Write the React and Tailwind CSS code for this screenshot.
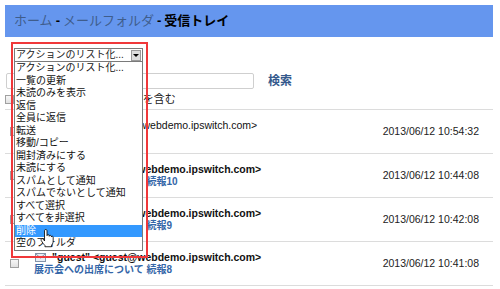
const MENU = [
  'アクションのリスト化...', '一覧の更新', '未読のみを表示', '返信', '全員に返信', '転送',
  '移動/コピー', '開封済みにする', '未読にする', 'スパムとして通知', 'スパムでないとして通知',
  'すべて選択', 'すべてを非選択', '削除', '空のフォルダ',
];

const MESSAGES = [
  { subject: '展示会のご案内', date: '2013/06/12 10:54:32', unread: false },
  { subject: '展示会への出席について 続報10', date: '2013/06/12 10:44:08', unread: true },
  { subject: '展示会への出席について 続報9', date: '2013/06/12 10:42:08', unread: true },
  { subject: '展示会への出席について 続報8', date: '2013/06/12 10:41:08', unread: true },
];

const FONT = { fontFamily: '"Liberation Sans", "Noto Sans CJK JP", sans-serif' };

function Box() {
  return <div className="w-[9px] h-[9px] shrink-0 border border-[#a0a0a0] bg-gradient-to-b from-[#f7f7f7] to-[#e2e2e2]" />;
}

function Envelope() {
  return (
    <svg width="11" height="9" viewBox="0 0 11 9" className="shrink-0">
      <rect x="0.5" y="0.5" width="10" height="8" fill="#e9eef5" stroke="#8593a8" />
      <path d="M0.5 0.5 L5.5 5 L10.5 0.5" fill="none" stroke="#8593a8" />
    </svg>
  );
}

function Reply() {
  return (
    <svg width="10" height="9" viewBox="0 0 10 9" className="shrink-0">
      <path d="M4 1 L0.5 4.5 L4 8 V6 C6.5 6 8 6.5 9.5 8.5 C9 5 7 3 4 3 Z" fill="#7b9cc9" stroke="#4d6f9e" strokeWidth="0.6" />
    </svg>
  );
}

function Hand() {
  return (
    <svg width="14" height="19" viewBox="0 0 17 22">
      <path
        d="M5.5 1.5 C5.5 0.7 6.2 0 7 0 C7.8 0 8.5 0.7 8.5 1.5 V7.5 C8.5 6.7 9.2 6.3 9.9 6.3 C10.6 6.3 11.2 6.8 11.2 7.6 V8.3 C11.2 7.6 11.8 7.2 12.5 7.2 C13.2 7.2 13.8 7.7 13.8 8.4 V9.2 C13.8 8.6 14.3 8.2 14.9 8.2 C15.5 8.2 16 8.7 16 9.3 V14 C16 16.5 15 18 14 19 V21 H6 V19.5 C5 18.5 3 16 1.5 13.5 C1 12.6 1.3 11.6 2.1 11.3 C2.9 11 3.8 11.4 4.3 12.2 L5.5 14 Z"
        fill="#fff"
        stroke="#000"
        strokeWidth="1"
      />
    </svg>
  );
}

export default function App() {
  return (
    <div className="relative w-[500px] h-[289px] bg-white overflow-hidden text-[#222]" style={FONT}>
      <div className="ml-[5px] pt-[5px] w-[488px]">
        {/* breadcrumb */}
        <div className="h-[32px] bg-[#6596ee] flex items-center pl-[9px] text-[13px]">
          <span className="text-[#3f5d8c]">ホーム</span>
          <span className="font-bold text-black mx-[3px]">-</span>
          <span className="text-[#3f5d8c]">メールフォルダ</span>
          <span className="font-bold text-black mx-[3px]">-</span>
          <span className="text-black font-bold">受信トレイ</span>
        </div>

        {/* action select (closed) */}
        <div className="mt-[11px] pl-[9px]">
          <div className="w-[129px] h-[14px] border border-[#7a7a7a] bg-white flex items-center justify-between pl-[1px] pr-[1px] text-[10px] leading-none">
            <span>アクションのリスト化...</span>
            <div className="w-[10px] h-[11px] bg-[#dcdcdc] border border-[#9a9a9a] flex items-center justify-center">
              <div className="w-0 h-0 border-l-[3px] border-r-[3px] border-t-[3px] border-l-transparent border-r-transparent border-t-black" />
            </div>
          </div>
        </div>

        {/* search */}
        <div className="mt-[11px] h-[16px] flex items-center">
          <div className="ml-[1px] w-[248px] h-[16px] border border-[#cfcfcf] rounded-[2px] bg-white" />
          <span className="ml-[14px] text-[12px] font-bold text-[#34598c]">検索</span>
        </div>

        <div className="h-[20px] flex items-center text-[11px]">
          <Box />
          <span className="ml-[8px]">メッセージの本文の内容を含む</span>
        </div>

        {/* message list */}
        <div className="border-t border-[#dcdcdc]">
          {MESSAGES.map((m, i) => (
            <div key={i} className="h-[44px] border-b border-[#dcdcdc] flex items-center">
              <div className="ml-[5px]">
                <Box />
              </div>
              <div className="ml-[15px] flex-1 flex flex-col">
                <div className="h-[12.5px] flex items-center ml-[1px]">
                  <Envelope />
                  {!m.unread && <span className="ml-[2px]"><Reply /></span>}
                  <span className={`ml-[6px] text-[10.5px] leading-none text-[#111] ${m.unread ? 'font-bold' : ''}`}>
                    "guest" &lt;guest@webdemo.ipswitch.com&gt;
                  </span>
                </div>
                <div className={`h-[12.5px] flex items-center text-[10px] leading-none text-[#3466a8] ${m.unread ? 'font-bold' : ''}`}>
                  {m.subject}
                </div>
              </div>
              <div className="pr-[14px] text-[10.5px] text-[#222]">{m.date}</div>
            </div>
          ))}
        </div>
      </div>

      {/* open dropdown list */}
      <div className="absolute left-[14px] top-[61px] w-[129px] border border-[#7a7a7a] bg-white text-[10px]">
        {MENU.map((t, i) => (
          <div
            key={t}
            className={`h-[12.5px] flex items-center pl-[1px] leading-none ${i === 13 ? 'bg-[#3399ff] text-white' : 'text-[#111]'}`}
          >
            {t}
          </div>
        ))}
      </div>

      {/* annotation frame */}
      <div className="absolute left-[11px] top-[42px] w-[137px] h-[216px] border-2 border-[#f0383a]" />

      <div className="absolute left-[40px] top-[229px]">
        <Hand />
      </div>
    </div>
  );
}
